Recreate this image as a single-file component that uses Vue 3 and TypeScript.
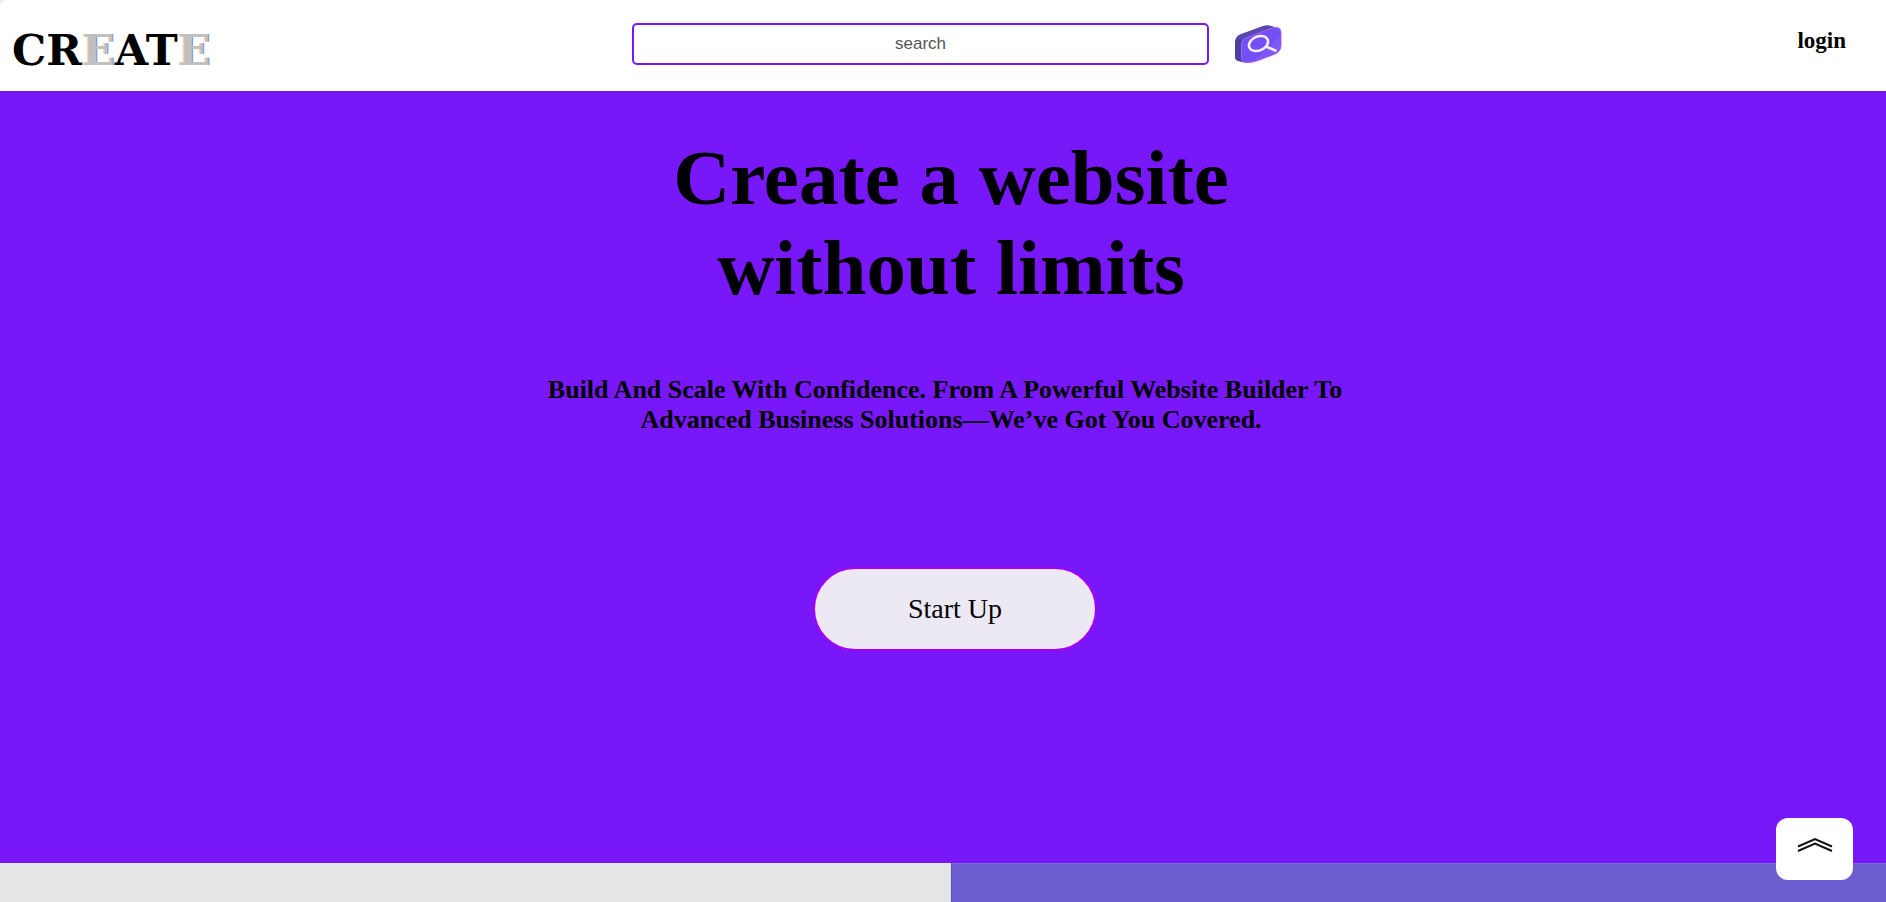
<script setup lang="ts">
import { ref } from 'vue'

interface LogoLetter {
  char: string
  muted: boolean
}

const query = ref<string>('')
const logo: LogoLetter[] = [...'CREATE'].map((char) => ({ char, muted: char === 'E' }))

function scrollToTop(): void {
  window.scrollTo({ top: 0, behavior: 'smooth' })
}
</script>

<template>
  <div class="page">
    <header class="header">
      <a class="logo" href="#" aria-label="CREATE"><span
        v-for="(letter, i) in logo"
        :key="i"
        :class="{ muted: letter.muted }"
      >{{ letter.char }}</span></a>

      <form class="search" role="search" @submit.prevent>
        <input v-model="query" class="search-input" type="text" placeholder="search" aria-label="search" />
        <button class="search-button" type="submit" aria-label="Submit search">
          <svg viewBox="0 0 47 40" width="47" height="40" aria-hidden="true">
            <path d="M0 18 Q0 13 5 11 L27 2.500 Q34 0 40 3.500 L20 36 L9 38.500 L3 37 Q0 36 0 33 Z" fill="#4b3fa3" />
            <path d="M2 13 Q3 11 6 10 L27 2.500 Q34 0 40 3.500 L13 13.500 Q9 15 7 17 Z" fill="#5748b4" />
            <path d="M6.500 21 Q6.500 15.500 12 13.500 L36 4.500 Q46 1.500 46 8.500 V21 Q46 27.500 40 30 L23 36.500 Q16 39 11 38.500 Q6.500 38 6.500 34 Z" fill="#7150f6" stroke="#b45cf2" stroke-width="1" />
            <path d="M45.500 12 V21 Q45.500 27 40 29.500 L23 36 L20 36.500 Z" fill="#8058ff" />
            <ellipse cx="23.500" cy="19.500" rx="10" ry="7" transform="rotate(-24 23.500 19.500)" fill="none" stroke="#f6efff" stroke-width="2.500" />
            <path d="M31 22.500 L41.500 27" stroke="#f6efff" stroke-width="2.500" />
          </svg>
        </button>
      </form>

      <a class="login" href="#">login</a>
    </header>

    <main class="main">
      <section class="hero">
        <h1 class="title">Create a website<br />without limits</h1>
        <p class="subtitle">
          <span class="lead">Build And Scale With Confidence. From A Powerful Website Builder To</span><br />
          Advanced Business Solutions—We’ve Got You Covered.
        </p>
        <button class="start" type="button">Start Up</button>
      </section>

      <section class="panels">
        <div class="panel light"></div>
        <div class="panel violet"></div>
      </section>
    </main>

    <button class="to-top" type="button" aria-label="Back to top" @click="scrollToTop">
      <svg viewBox="0 0 36 16" width="36" height="16" aria-hidden="true">
        <path d="M1 9.500 L18 2 L35 9.500 M1 14 L18 6.500 L35 14" fill="none" stroke="#111" stroke-width="2" />
      </svg>
    </button>
  </div>
</template>

<style>
body {
  margin: 0;
  background: #f0f0f0;
}
</style>

<style scoped>
.page {
  display: flex;
  flex-direction: column;
  min-height: 100vh;
  font-family: "Liberation Serif", "Times New Roman", serif;
  color: #000;
}

.header {
  display: grid;
  grid-template-columns: 632fr 650fr 604fr;
  height: 91px;
  background: #fff;
  border-top-left-radius: 8px;
}

.logo {
  align-self: center;
  justify-self: start;
  padding: 8px 0 0 12px;
  font-family: "DejaVu Serif", serif;
  font-size: 43px;
  font-weight: bold;
  line-height: 48px;
  color: #000;
  text-decoration: none;
}

.logo .muted {
  color: #c0c0c0;
  text-shadow: -1px 0 #ffd9ae, 1px 0 #6f8fc4;
}

.search {
  display: flex;
  align-items: center;
  gap: 26px;
  height: 42px;
  margin-top: 23px;
}

.search-input {
  box-sizing: border-box;
  flex: 1;
  min-width: 0;
  height: 42px;
  padding: 0 8px;
  border: 2px solid #7818f8;
  border-radius: 5px;
  outline: none;
  background: #fff;
  font-family: "Liberation Sans", Arial, sans-serif;
  font-size: 17px;
  text-align: center;
}

.search-input::placeholder {
  color: #555;
  opacity: 1;
}

.search-button {
  display: flex;
  padding: 0;
  border: 0;
  background: none;
  cursor: pointer;
}

.login {
  justify-self: end;
  align-self: start;
  margin: 28px 40px 0 0;
  font-size: 23px;
  font-weight: bold;
  line-height: 26px;
  color: #000;
  text-decoration: none;
}

.main {
  display: flex;
  flex: 1;
  flex-direction: column;
}

.hero {
  box-sizing: border-box;
  display: flex;
  flex-direction: column;
  align-items: center;
  min-height: 772px;
  padding: 42px 0 40px 16px;
  background: #7818f8;
  text-align: center;
}

.title {
  margin: 0;
  font-size: 79px;
  line-height: 90px;
}

.subtitle {
  margin: 62px 0 0;
  font-size: 26px;
  font-weight: bold;
  line-height: 30px;
}

.lead {
  padding-right: 12px;
}

.start {
  box-sizing: border-box;
  width: 284px;
  height: 84px;
  margin: 132px 0 0 8px;
  border: 2px solid #a600f8;
  border-radius: 42px;
  background: #ece8f4;
  font-family: inherit;
  font-size: 28px;
  color: #000;
  cursor: pointer;
}

.panels {
  display: grid;
  flex: 1;
  grid-template-columns: 951fr 935fr;
}

.light {
  background: #e5e5e5;
}

.violet {
  border-top: 1px solid #7868d8;
  border-left: 1px solid #5a4fc0;
  background: #6c5dd0;
}

.to-top {
  position: fixed;
  right: 33px;
  bottom: 22px;
  display: flex;
  align-items: center;
  justify-content: center;
  width: 77px;
  height: 62px;
  padding: 0 0 8px;
  border: 0;
  border-radius: 12px;
  background: #fff;
  cursor: pointer;
}
</style>
